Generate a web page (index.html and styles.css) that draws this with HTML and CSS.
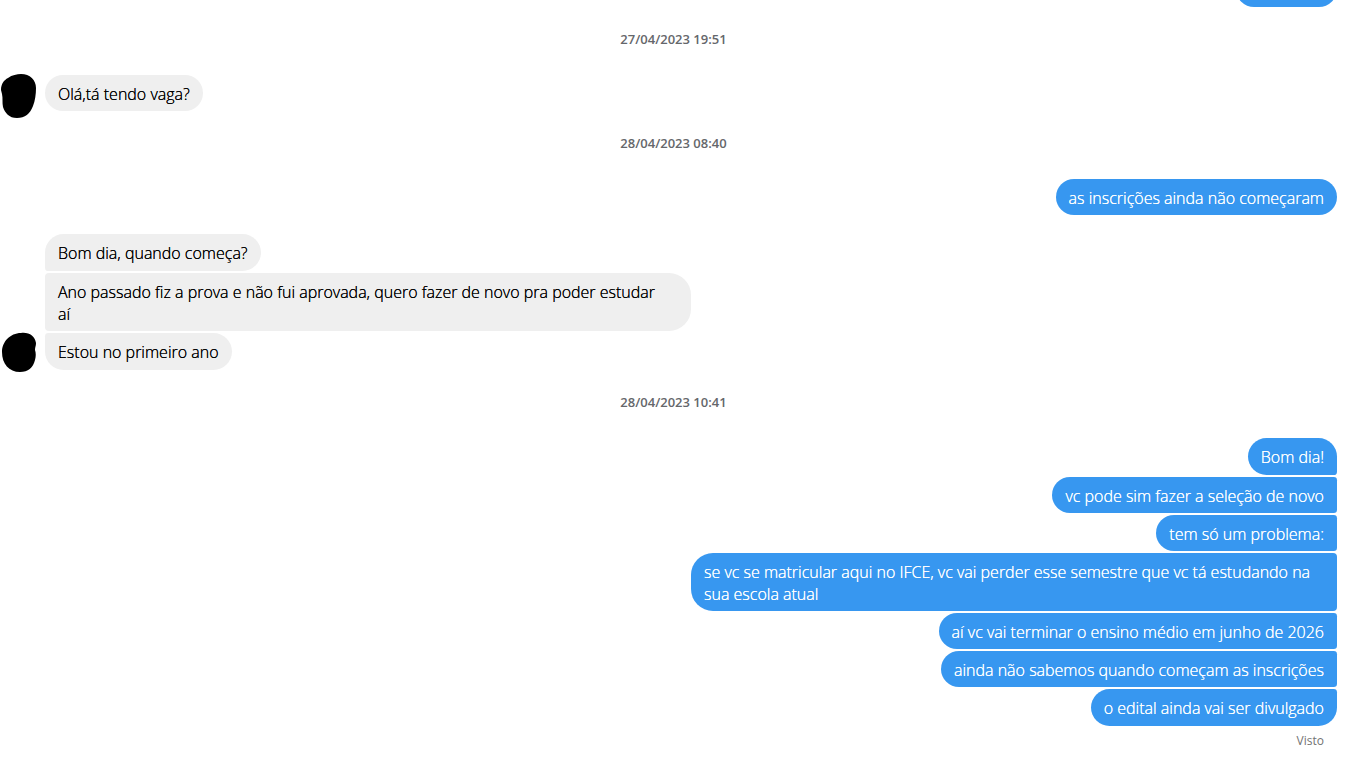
FILE: index.html
```html
<!DOCTYPE html>
<html lang="pt-BR">
<head>
<meta charset="utf-8">
<meta name="viewport" content="width=device-width, initial-scale=1">
<title>Conversa</title>
<link rel="stylesheet" href="styles.css">
</head>
<body>
<main class="chat">
  <div class="previous" aria-hidden="true"></div>
  <time class="date" datetime="2023-04-27T19:51">27/04/2023 19:51</time>
  <section class="row">
    <div class="avatar"><svg class="avatar-shape" width="36" height="44" viewBox="0 0 36 44" aria-hidden="true"><path d="M1 16C1 10 4 6 8 4C12 1 17 0 21 0C30 0 36 6 36 14C36 20 35 27 33 32C30 40 25 44 17 44C9 44 5 39 3 33C2 29 3 24 2 20Z"/></svg></div>
    <div class="group">
      <p class="bubble">Olá,tá tendo vaga?</p>
    </div>
  </section>
  <time class="date" datetime="2023-04-28T08:40">28/04/2023 08:40</time>
  <section class="row">
    <div class="group sent">
      <p class="bubble">as inscrições ainda não começaram</p>
    </div>
  </section>
  <section class="row reply">
    <div class="avatar"><svg class="avatar-shape" width="36" height="40" viewBox="0 0 36 40" aria-hidden="true"><path d="M2 19C2 9 10 0 21 0C29-1 35 3 36 10C36 13 35 14 35 17C36 20 36 23 35 27C33 35 28 39 20 39C9 39 2 31 2 19Z"/></svg></div>
    <div class="group">
      <p class="bubble first">Bom dia, quando começa?</p>
      <p class="bubble long">Ano passado fiz a prova e não fui aprovada, quero fazer de novo pra poder estudar<br>aí</p>
      <p class="bubble last">Estou no primeiro ano</p>
    </div>
  </section>
  <time class="date" datetime="2023-04-28T10:41">28/04/2023 10:41</time>
  <section class="row">
    <div class="group sent">
      <p class="bubble first">Bom dia!</p>
      <p class="bubble">vc pode sim fazer a seleção de novo</p>
      <p class="bubble">tem só um problema:</p>
      <p class="bubble long">se vc se matricular aqui no IFCE, vc vai perder esse semestre que vc tá estudando na sua escola atual</p>
      <p class="bubble">aí vc vai terminar o ensino médio em junho de 2026</p>
      <p class="bubble">ainda não sabemos quando começam as inscrições</p>
      <p class="bubble last">o edital ainda vai ser divulgado</p>
    </div>
  </section>
  <p class="seen">Visto</p>
</main>
</body>
</html>
```
FILE: styles.css
```css
* { box-sizing: border-box; }

body {
  margin: 0;
  background: #fff;
  color: #000;
  font: 300 16px/22px "Segoe UI", "Open Sans", "Noto Sans", sans-serif;
}

p { margin: 0; }

.chat {
  display: flex;
  flex-direction: column;
}

/* Lower edge of the message scrolled above the window */
.previous {
  align-self: flex-end;
  width: 101px;
  height: 36px;
  margin: -29px 10px 0 0;
  border-radius: 18px;
  background: #3797f0;
}

.date {
  padding: 22px 0 26px;
  color: #65676b;
  font-size: 13px;
  font-weight: 600;
  line-height: 20px;
  text-align: center;
}

.row {
  position: relative;
  padding: 0 10px 0 45px;
}

.reply { margin-top: 19px; }

.avatar {
  position: absolute;
  left: 0;
  bottom: 0;
  width: 36px;
  height: 37px;
}

.avatar-shape { display: block; overflow: visible; }

.group {
  display: flex;
  flex-direction: column;
  align-items: flex-start;
  gap: 2px;
}

.sent { align-items: flex-end; }

.bubble {
  max-width: 50%;
  padding: 8px 13px 6px;
  border-radius: 4px 22px 22px 4px;
  background: #efefef;
  /* Firms up the thin strokes of the light weight */
  text-shadow: 0 0 0 currentColor;
}

.long { width: 100%; }

.sent .bubble {
  border-radius: 22px 4px 4px 22px;
  background: #3797f0;
  color: #fff;
}

.first,
.last { padding-bottom: 7px; }

.first { border-top-left-radius: 22px; }
.last { border-bottom-left-radius: 22px; }
.sent .first { border-top-right-radius: 22px; }
.sent .last { border-bottom-right-radius: 22px; }

.group .bubble:only-child { border-radius: 22px; }

.seen {
  padding: 5px 23px 8px;
  color: #737373;
  font-size: 12px;
  font-weight: 400;
  line-height: 20px;
  text-align: right;
}
```
